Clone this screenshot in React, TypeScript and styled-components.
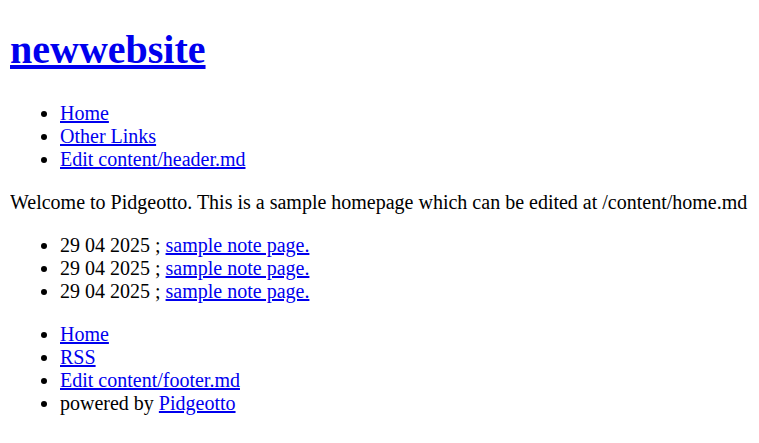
import React from "react";
import styled, { createGlobalStyle } from "styled-components";

const GlobalStyle = createGlobalStyle`
  html, body { background: #ffffff; }
  body {
    margin: 10px;
    font-family: "Liberation Serif", "Times New Roman", serif;
    font-size: 20px;
    color: #000000;
  }
`;

const Title = styled.h1`
  font-size: 40px;
  font-weight: bold;
  margin: 16px 0 28.8px;
`;

const Link = styled.a`
  color: #0000ee;
  text-decoration: underline;
`;

const List = styled.ul`
  margin: 20px 0;
  padding-left: 50px;
  list-style: disc;
`;

const Item = styled.li``;

const Para = styled.p`
  margin: 20px 0;
`;

export default function App() {
  const notes = [1, 2, 3];
  return (
    <>
      <GlobalStyle />
      <header>
        <Title>
          <Link href="#">newwebsite</Link>
        </Title>
        <List>
          <Item><Link href="#">Home</Link></Item>
          <Item><Link href="#">Other Links</Link></Item>
          <Item><Link href="#">Edit content/header.md</Link></Item>
        </List>
      </header>
      <main>
        <Para>
          Welcome to Pidgeotto. This is a sample homepage which can be edited at /content/home.md
        </Para>
        <List>
          {notes.map((n) => (
            <Item key={n}>
              29 04 2025 ; <Link href="#">sample note page.</Link>
            </Item>
          ))}
        </List>
      </main>
      <footer>
        <List>
          <Item><Link href="#">Home</Link></Item>
          <Item><Link href="#">RSS</Link></Item>
          <Item><Link href="#">Edit content/footer.md</Link></Item>
          <Item>
            powered by <Link href="#">Pidgeotto</Link>
          </Item>
        </List>
      </footer>
    </>
  );
}
